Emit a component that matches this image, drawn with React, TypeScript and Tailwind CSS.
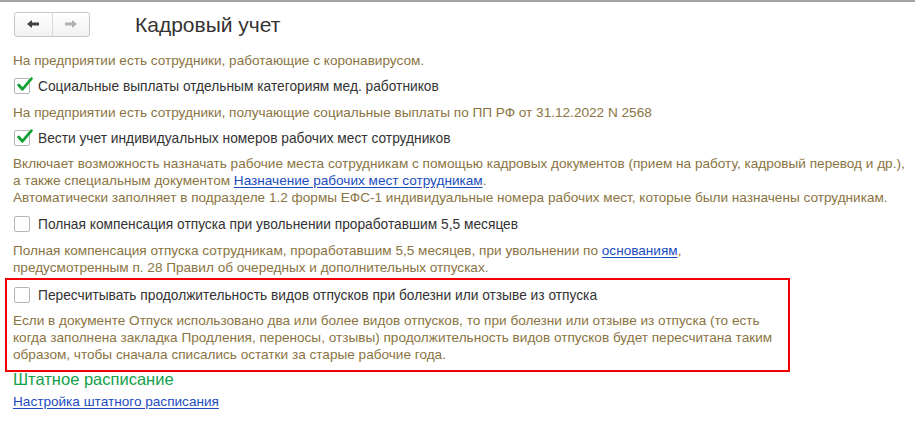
import React from "react";

function CheckBox({ checked }: { checked?: boolean }) {
  return (
    <div className="relative w-[16px] h-[16px] shrink-0 rounded-[2px] border border-[#b5b5b5] bg-white">
      {checked && (
        <svg
          viewBox="0 0 16 16"
          className="absolute left-[1px] top-[-3px] w-[17px] h-[17px]"
        >
          <path
            d="M2.5 8.5 L6 12.5 L14.5 2.5"
            fill="none"
            stroke="#12a032"
            strokeWidth="2.6"
            strokeLinecap="round"
            strokeLinejoin="round"
          />
        </svg>
      )}
    </div>
  );
}

function Option({ checked, label }: { checked?: boolean; label: string }) {
  return (
    <div className="flex items-center gap-[8px] h-[20px] pl-[1px] text-[13.75px] text-[#333333]">
      <CheckBox checked={checked} />
      <span>{label}</span>
    </div>
  );
}

const linkCls = "text-[#1a4bbf] underline underline-offset-[2px]";

export default function App() {
  return (
    <main
      className="w-[915px] h-[422px] bg-white border-t-2 border-[#a3a3a3] overflow-hidden"
      style={{ fontFamily: '"Liberation Sans", Arial, sans-serif' }}
    >
      <div className="flex items-center h-[38px] pl-[14px] pt-[6px]">
        <div className="flex h-[25px] w-[76px] rounded-[3px] border border-[#c8c8c8] bg-gradient-to-b from-white to-[#f2f2f2]">
          <div className="flex-1 flex items-center justify-center border-r border-[#dadada]">
            <svg viewBox="0 0 14 10" className="w-[14px] h-[10px]">
              <path d="M1 5 L6 1 L6 3.5 L13 3.5 L13 6.5 L6 6.5 L6 9 Z" fill="#404040" />
            </svg>
          </div>
          <div className="flex-1 flex items-center justify-center">
            <svg viewBox="0 0 14 10" className="w-[14px] h-[10px]">
              <path d="M13 5 L8 1 L8 3.5 L1 3.5 L1 6.5 L8 6.5 L8 9 Z" fill="#b0b0b0" />
            </svg>
          </div>
        </div>
        <h1 className="ml-[45px] text-[21px] text-[#333333] leading-none">Кадровый учет</h1>
      </div>

      <div className="pl-[13px] pt-[12px] text-[13.6px] leading-[17px] text-[#8a7442]">
        <p>На предприятии есть сотрудники, работающие с коронавирусом.</p>
        <div className="mt-[7px]">
          <Option checked label="Социальные выплаты отдельным категориям мед. работников" />
        </div>
        <p className="mt-[8px]">
          На предприятии есть сотрудники, получающие социальные выплаты по ПП РФ от 31.12.2022 N 2568
        </p>
        <div className="mt-[7px]">
          <Option checked label="Вести учет индивидуальных номеров рабочих мест сотрудников" />
        </div>
        <p className="mt-[7px]">
          Включает возможность назначать рабочие места сотрудникам с помощью кадровых документов (прием на работу, кадровый перевод и др.),
          <br />
          а также специальным документом <span className={linkCls}>Назначение рабочих мест сотрудникам</span>.
          <br />
          Автоматически заполняет в подразделе 1.2 формы ЕФС-1 индивидуальные номера рабочих мест, которые были назначены сотрудникам.
        </p>
        <div className="mt-[8px]">
          <Option label="Полная компенсация отпуска при увольнении проработавшим 5,5 месяцев" />
        </div>
        <p className="mt-[8px]">
          Полная компенсация отпуска сотрудникам, проработавшим 5,5 месяцев, при увольнении по <span className={linkCls}>основаниям</span>,
          <br />
          предусмотренным п. 28 Правил об очередных и дополнительных отпусках.
        </p>
        <div className="ml-[-8px] mt-[2px] w-[785px] border-2 border-[#f00000] pl-[6px] pt-[5px] pb-[7px]">
          <Option label="Пересчитывать продолжительность видов отпусков при болезни или отзыве из отпуска" />
          <p className="mt-[7px]">
            Если в документе Отпуск использовано два или более видов отпусков, то при болезни или отзыве из отпуска (то есть
            <br />
            когда заполнена закладка Продления, переносы, отзывы) продолжительность видов отпусков будет пересчитана таким
            <br />
            образом, чтобы сначала списались остатки за старые рабочие года.
          </p>
        </div>
        <div className="mt-[-2px] text-[16.5px] leading-[18px] text-[#13a04a]">Штатное расписание</div>
        <div className="mt-[5px]">
          <span className={linkCls}>Настройка штатного расписания</span>
        </div>
      </div>
    </main>
  );
}
